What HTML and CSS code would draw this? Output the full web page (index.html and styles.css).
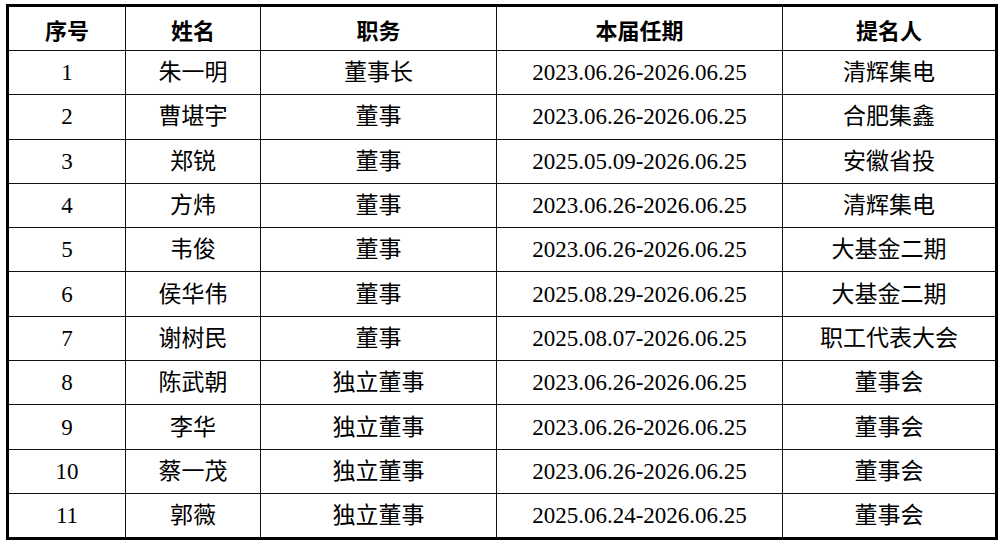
FILE: index.html
```html
<!DOCTYPE html>
<html lang="zh-CN">
<head>
<meta charset="utf-8">
<title>董事会成员</title>
<link rel="stylesheet" href="styles.css">
</head>
<body>
<table class="board">
  <colgroup>
    <col class="c-no">
    <col class="c-name">
    <col class="c-role">
    <col class="c-term">
    <col class="c-nom">
  </colgroup>
  <thead>
    <tr><th>序号</th><th>姓名</th><th>职务</th><th>本届任期</th><th>提名人</th></tr>
  </thead>
  <tbody>
    <tr><td>1</td><td>朱一明</td><td>董事长</td><td>2023.06.26-2026.06.25</td><td>清辉集电</td></tr>
    <tr><td>2</td><td>曹堪宇</td><td>董事</td><td>2023.06.26-2026.06.25</td><td>合肥集鑫</td></tr>
    <tr><td>3</td><td>郑锐</td><td>董事</td><td>2025.05.09-2026.06.25</td><td>安徽省投</td></tr>
    <tr><td>4</td><td>方炜</td><td>董事</td><td>2023.06.26-2026.06.25</td><td>清辉集电</td></tr>
    <tr><td>5</td><td>韦俊</td><td>董事</td><td>2023.06.26-2026.06.25</td><td>大基金二期</td></tr>
    <tr><td>6</td><td>侯华伟</td><td>董事</td><td>2025.08.29-2026.06.25</td><td>大基金二期</td></tr>
    <tr><td>7</td><td>谢树民</td><td>董事</td><td>2025.08.07-2026.06.25</td><td>职工代表大会</td></tr>
    <tr><td>8</td><td>陈武朝</td><td>独立董事</td><td>2023.06.26-2026.06.25</td><td>董事会</td></tr>
    <tr><td>9</td><td>李华</td><td>独立董事</td><td>2023.06.26-2026.06.25</td><td>董事会</td></tr>
    <tr><td>10</td><td>蔡一茂</td><td>独立董事</td><td>2023.06.26-2026.06.25</td><td>董事会</td></tr>
    <tr><td>11</td><td>郭薇</td><td>独立董事</td><td>2025.06.24-2026.06.25</td><td>董事会</td></tr>
  </tbody>
</table>
</body>
</html>
```

FILE: styles.css
```css
html, body {
  margin: 0;
  padding: 0;
  background: #fff;
}

body {
  padding: 4px 0 0 6px;
}

.board {
  border-collapse: collapse;
  table-layout: fixed;
  width: 989px;
  border: 3px solid #000;
  color: #000;
}

.c-no { width: 118px; }
.c-name { width: 135px; }
.c-role { width: 236px; }
.c-term { width: 286px; }
.c-nom { width: 214px; }

.board th,
.board td {
  border: 1px solid #111;
  text-align: center;
  vertical-align: middle;
  padding: 0;
  height: 43.3px;
  line-height: 1;
}

.board th {
  font-family: "Noto Sans CJK SC", "Liberation Sans", sans-serif;
  font-weight: 700;
  font-size: 22px;
  height: 43px;
}

.board td {
  font-family: "Liberation Serif", "Noto Sans CJK SC", serif;
  font-size: 23px;
  font-weight: 400;
}
```
